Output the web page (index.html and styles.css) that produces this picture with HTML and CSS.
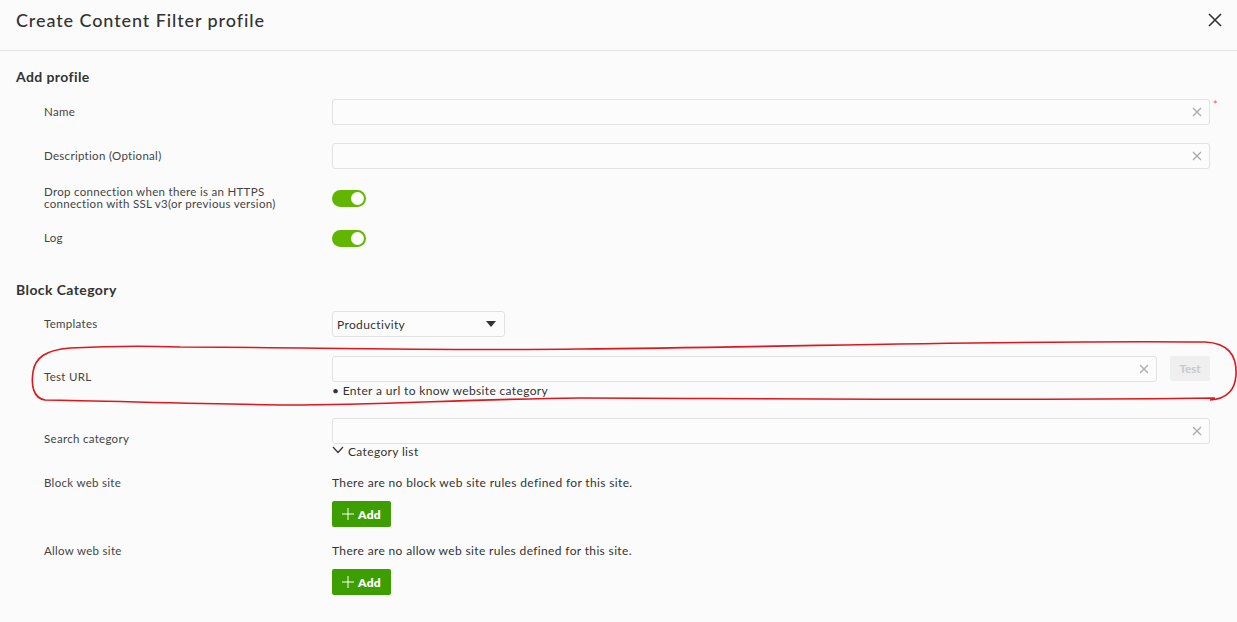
FILE: index.html
```
<!DOCTYPE html>
<html lang="en">

<head>
  <meta charset="UTF-8">
  <meta name="viewport" content="width=device-width, initial-scale=1.0">
  <title>Create Content Filter profile</title>
  <link rel="stylesheet" href="styles.css">
</head>

<body>
  <div class="dialog">
    <!-- header -->
    <div class="dialog-header">
      <h1 class="dialog-title">Create Content Filter profile</h1>
      <button class="close-btn" aria-label="close">
        <svg width="16" height="16" viewBox="0 0 16 16"><path d="M2 2 L14 14 M14 2 L2 14" stroke="#333" stroke-width="1.6" fill="none"/></svg>
      </button>
    </div>

    <div class="dialog-body">
      <!-- Add profile -->
      <h2 class="section-title">Add profile</h2>

      <div class="form-row row-first">
        <label class="row-label">Name</label>
        <div class="row-control">
          <div class="text-input required">
            <span class="clear-x"><svg width="10" height="10" viewBox="0 0 10 10"><path d="M1 1 L9 9 M9 1 L1 9" stroke="#aaa" stroke-width="1.3"/></svg></span>
          </div>
        </div>
      </div>

      <div class="form-row">
        <label class="row-label">Description (Optional)</label>
        <div class="row-control">
          <div class="text-input">
            <span class="clear-x"><svg width="10" height="10" viewBox="0 0 10 10"><path d="M1 1 L9 9 M9 1 L1 9" stroke="#aaa" stroke-width="1.3"/></svg></span>
          </div>
        </div>
      </div>

      <div class="form-row row-drop">
        <label class="row-label two-line">Drop connection when there is an HTTPS connection with SSL v3(or previous version)</label>
        <div class="row-control">
          <div class="toggle on"><span class="knob"></span></div>
        </div>
      </div>

      <div class="form-row row-log">
        <label class="row-label">Log</label>
        <div class="row-control">
          <div class="toggle on"><span class="knob"></span></div>
        </div>
      </div>

      <!-- Block Category -->
      <h2 class="section-title second">Block Category</h2>

      <div class="form-row row-templates">
        <label class="row-label">Templates</label>
        <div class="row-control">
          <div class="select-box">
            <span>Productivity</span>
            <svg width="10" height="6" viewBox="0 0 10 6"><path d="M0 0 H10 L5 6 Z" fill="#333"/></svg>
          </div>
        </div>
      </div>

      <div class="form-row row-test">
        <label class="row-label">Test URL</label>
        <div class="row-control">
          <div class="test-line">
            <div class="text-input">
              <span class="clear-x"><svg width="10" height="10" viewBox="0 0 10 10"><path d="M1 1 L9 9 M9 1 L1 9" stroke="#aaa" stroke-width="1.3"/></svg></span>
            </div>
            <button class="test-btn" disabled>Test</button>
          </div>
          <div class="hint">&bull; Enter a url to know website category</div>
        </div>
      </div>

      <div class="form-row row-search">
        <label class="row-label">Search category</label>
        <div class="row-control">
          <div class="text-input">
            <span class="clear-x"><svg width="10" height="10" viewBox="0 0 10 10"><path d="M1 1 L9 9 M9 1 L1 9" stroke="#aaa" stroke-width="1.3"/></svg></span>
          </div>
          <div class="cat-list">
            <svg width="12" height="8" viewBox="0 0 12 8"><path d="M1 1 L6 6.5 L11 1" stroke="#333" stroke-width="1.2" fill="none"/></svg>
            <span>Category list</span>
          </div>
        </div>
      </div>

      <div class="form-row row-sites">
        <label class="row-label">Block web site</label>
        <div class="row-control">
          <p class="empty-text">There are no block web site rules defined for this site.</p>
          <button class="add-btn"><svg class="plus" width="12" height="12" viewBox="0 0 12 12"><path d="M6 0 V12 M0 6 H12" stroke="#fff" stroke-width="1"/></svg>Add</button>
        </div>
      </div>

      <div class="form-row row-sites allow">
        <label class="row-label">Allow web site</label>
        <div class="row-control">
          <p class="empty-text">There are no allow web site rules defined for this site.</p>
          <button class="add-btn"><svg class="plus" width="12" height="12" viewBox="0 0 12 12"><path d="M6 0 V12 M0 6 H12" stroke="#fff" stroke-width="1"/></svg>Add</button>
        </div>
      </div>
    </div>
  </div>

  <!-- red pen mark drawn on top of the screenshot -->
  <svg class="pen-mark" width="1237" height="622" viewBox="0 0 1237 622">
    <path d="M180 347 C 300 347, 420 351, 580 349 C 800 347, 1000 340, 1205 342 C 1228 343, 1237 355, 1236 375 C 1235 392, 1225 399, 1210 400
             M1215 398 C 1000 401, 700 398, 580 398 C 470 399, 380 405, 290 405 C 200 404, 110 401, 45 400 C 33 398, 31 385, 33 372 C 35 358, 45 350, 70 348 C 110 346, 150 346, 180 347"
          stroke="#e0161b" stroke-width="1.6" fill="none"/>
  </svg>
</body>

</html>
```

FILE: styles.css
```
* {
  margin: 0;
  padding: 0;
  box-sizing: border-box;
}

body {
  font-family: 'Lato', 'Noto Sans', sans-serif;
  background: #fbfbfb;
  color: #333;
  width: 1237px;
  height: 622px;
  overflow: hidden;
  position: relative;
  letter-spacing: 0.3px;
}

/* header */
.dialog-header {
  height: 51px;
  border-bottom: 1px solid #e3e3e3;
  display: flex;
  align-items: center;
  justify-content: space-between;
  padding: 0 14px 0 16px;
}

.dialog-title {
  font-size: 18px;
  font-weight: 500;
  color: #333;
  letter-spacing: 0.9px;
  margin-top: -10px;
}

.close-btn {
  border: none;
  background: none;
  width: 16px;
  height: 16px;
  margin-top: -11px;
  cursor: pointer;
}

/* body */
.dialog-body {
  padding: 16px 27px 0 16px;
}

.section-title {
  font-size: 14px;
  font-weight: 700;
  color: #333;
  line-height: 20px;
  letter-spacing: 0.4px;
}

.section-title.second {
  margin-top: 29px;
}

.form-row {
  display: grid;
  grid-template-columns: 288px 1fr;
  align-items: center;
  margin-left: 28px;
  margin-top: 18px;
  min-height: 26px;
}

.row-first {
  margin-top: 12px;
}

.row-drop {
  margin-top: 16px;
}

.row-log {
  margin-top: 14px;
}

.row-templates {
  margin-top: 11px;
}

.row-test {
  margin-top: 19px;
}

.row-search {
  margin-top: 20px;
}

.row-sites {
  align-items: start;
  margin-top: 16px;
}

.row-sites.allow {
  margin-top: 17px;
}

.row-label {
  font-size: 11.5px;
  color: #444;
  line-height: 14px;
}

.two-line {
  line-height: 12px;
  padding-right: 20px;
}

.row-control {
  position: relative;
  font-size: 12px;
  letter-spacing: 0.35px;
}

/* inputs */
.text-input {
  height: 26px;
  border: 1px solid #e2e2e2;
  border-radius: 3px;
  background: #fcfcfc;
  position: relative;
  flex: 1;
}

.text-input.required::after {
  content: '*';
  position: absolute;
  right: -9px;
  top: -2px;
  color: #f0507a;
  font-size: 11px;
}

.clear-x {
  position: absolute;
  right: 7px;
  top: 7px;
  line-height: 0;
}

.toggle {
  width: 34px;
  height: 17px;
  border-radius: 9px;
  background: #62b600;
  position: relative;
}

.toggle .knob {
  position: absolute;
  right: 2px;
  top: 2px;
  width: 13px;
  height: 13px;
  border-radius: 50%;
  background: white;
}

.select-box {
  width: 173px;
  height: 26px;
  border: 1px solid #e2e2e2;
  border-radius: 3px;
  background: #fcfcfc;
  display: flex;
  align-items: center;
  justify-content: space-between;
  padding: 0 8px 0 4px;
  color: #333;
}

.test-line {
  display: flex;
  gap: 13px;
}

.test-btn {
  width: 40px;
  height: 25px;
  border: none;
  border-radius: 2px;
  background: #efefef;
  color: #c9c9c9;
  font-family: inherit;
  font-size: 11.5px;
  font-weight: 700;
}

.hint {
  color: #333;
  line-height: 15px;
  margin-top: 1px;
}

.cat-list {
  display: flex;
  align-items: center;
  gap: 4px;
  color: #333;
  line-height: 16px;
}

.cat-list svg {
  margin-top: -5px;
}

.empty-text {
  color: #333;
  line-height: 14px;
}

.add-btn {
  margin-top: 11px;
  width: 59px;
  height: 26px;
  border: none;
  border-radius: 2px;
  background: #3d9e00;
  color: white;
  font-family: inherit;
  font-size: 12px;
  font-weight: 800;
  letter-spacing: 0.3px;
  display: flex;
  align-items: center;
  justify-content: center;
  gap: 4px;
}

/* annotation overlay */
.pen-mark {
  position: absolute;
  left: 0;
  top: 0;
  pointer-events: none;
}
```
